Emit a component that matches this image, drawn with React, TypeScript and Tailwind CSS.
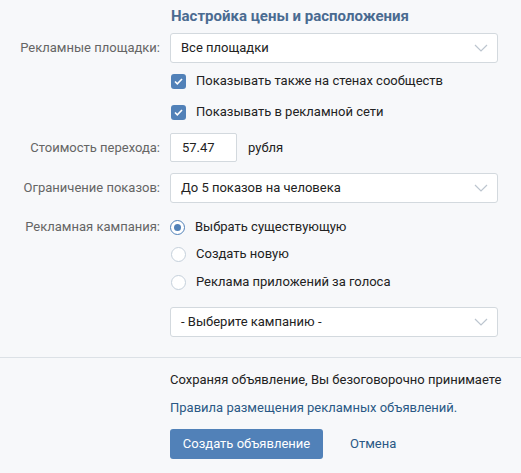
const font = { fontFamily: 'Roboto, "Open Sans", Arial, sans-serif' }

function Chevron() {
  return (
    <svg width="14" height="8" viewBox="0 0 14 8" fill="none" className="shrink-0">
      <path d="M1 1l6 6 6-6" stroke="#bcc5cf" strokeWidth="1.2" />
    </svg>
  )
}

function Select({ value }: { value: string }) {
  return (
    <div className="flex h-[30px] w-[328px] items-center justify-between rounded-[3px] border border-[#d3d9de] bg-white pl-[10px] pr-[9px] text-[13px] leading-[16px] text-[#222]">
      <span>{value}</span>
      <Chevron />
    </div>
  )
}

function Check({ label }: { label: string }) {
  return (
    <div className="flex h-[20px] items-center gap-[10px] text-[13px] leading-[16px] text-[#222]">
      <span className="flex h-[15px] w-[15px] items-center justify-center rounded-[3px] bg-[#5181b8]">
        <svg width="9" height="7" viewBox="0 0 9 7" fill="none">
          <path d="M1 3.5l2.3 2.3L8 1" stroke="white" strokeWidth="1.6" />
        </svg>
      </span>
      {label}
    </div>
  )
}

function Radio({ label, on }: { label: string; on?: boolean }) {
  return (
    <div className="flex h-[20px] items-center gap-[10px] text-[13px] leading-[16px] text-[#222]">
      <span
        className={
          on
            ? 'flex h-[15px] w-[15px] items-center justify-center rounded-full border border-[#5181b8] bg-white'
            : 'flex h-[15px] w-[15px] items-center justify-center rounded-full border border-[#c5d0db] bg-white'
        }
      >
        {on && <span className="h-[7px] w-[7px] rounded-full bg-[#5181b8]" />}
      </span>
      {label}
    </div>
  )
}

function Row({ label, children }: { label?: string; children: React.ReactNode }) {
  return (
    <div className="flex items-center">
      <div className="w-[160px] shrink-0 text-right text-[13px] leading-[16px] text-[#656565]">{label}</div>
      <div className="ml-[10px]">{children}</div>
    </div>
  )
}

export default function App() {
  return (
    <div className="h-[473px] w-[521px] overflow-hidden bg-[#f7f8fa]" style={font}>
      <div className="h-[33px] pl-[171px] text-[15px] font-bold leading-[33px] text-[#4a6b91]">
        Настройка цены и расположения
      </div>

      <div className="flex flex-col">
        <Row label="Рекламные площадки:">
          <Select value="Все площадки" />
        </Row>
        <div className="mt-[8px] ml-[171px] flex flex-col gap-[11px]">
          <Check label="Показывать также на стенах сообществ" />
          <Check label="Показывать в рекламной сети" />
        </div>

        <div className="mt-[11px]">
          <Row label="Стоимость перехода:">
            <div className="flex items-center gap-[11px]">
              <div className="flex h-[29px] w-[67px] items-center rounded-[2px] border border-[#d3d9de] bg-white pl-[11px] text-[13px] leading-[16px] text-[#222]">
                57.47
              </div>
              <span className="text-[13px] leading-[16px] text-[#222]">рубля</span>
            </div>
          </Row>
        </div>

        <div className="mt-[11px]">
          <Row label="Ограничение показов:">
            <Select value="До 5 показов на человека" />
          </Row>
        </div>

        <div className="mt-[14px]">
          <Row label="Рекламная кампания:">
            <Radio label="Выбрать существующую" on />
          </Row>
        </div>
        <div className="mt-[7px] ml-[171px] flex flex-col gap-[8px]">
          <Radio label="Создать новую" />
          <Radio label="Реклама приложений за голоса" />
        </div>

        <div className="mt-[15px] ml-[170px]">
          <Select value="- Выберите кампанию -" />
        </div>
      </div>

      <div className="mt-[20px] h-px bg-[#dce1e6]" />

      <div className="pl-[170px] pt-[8px] text-[13px] leading-[28px]">
        <div className="text-[#222]">Сохраняя объявление, Вы безоговорочно принимаете</div>
        <div className="text-[#2a5885]">Правила размещения рекламных объявлений.</div>
        <div className="mt-[7px] flex items-center gap-[27px]">
          <button className="h-[30px] w-[153px] rounded-[3px] bg-[#5181b8] text-[13px] leading-[16px] text-white">
            Создать объявление
          </button>
          <span className="leading-[16px] text-[#2a5885]">Отмена</span>
        </div>
      </div>
    </div>
  )
}
